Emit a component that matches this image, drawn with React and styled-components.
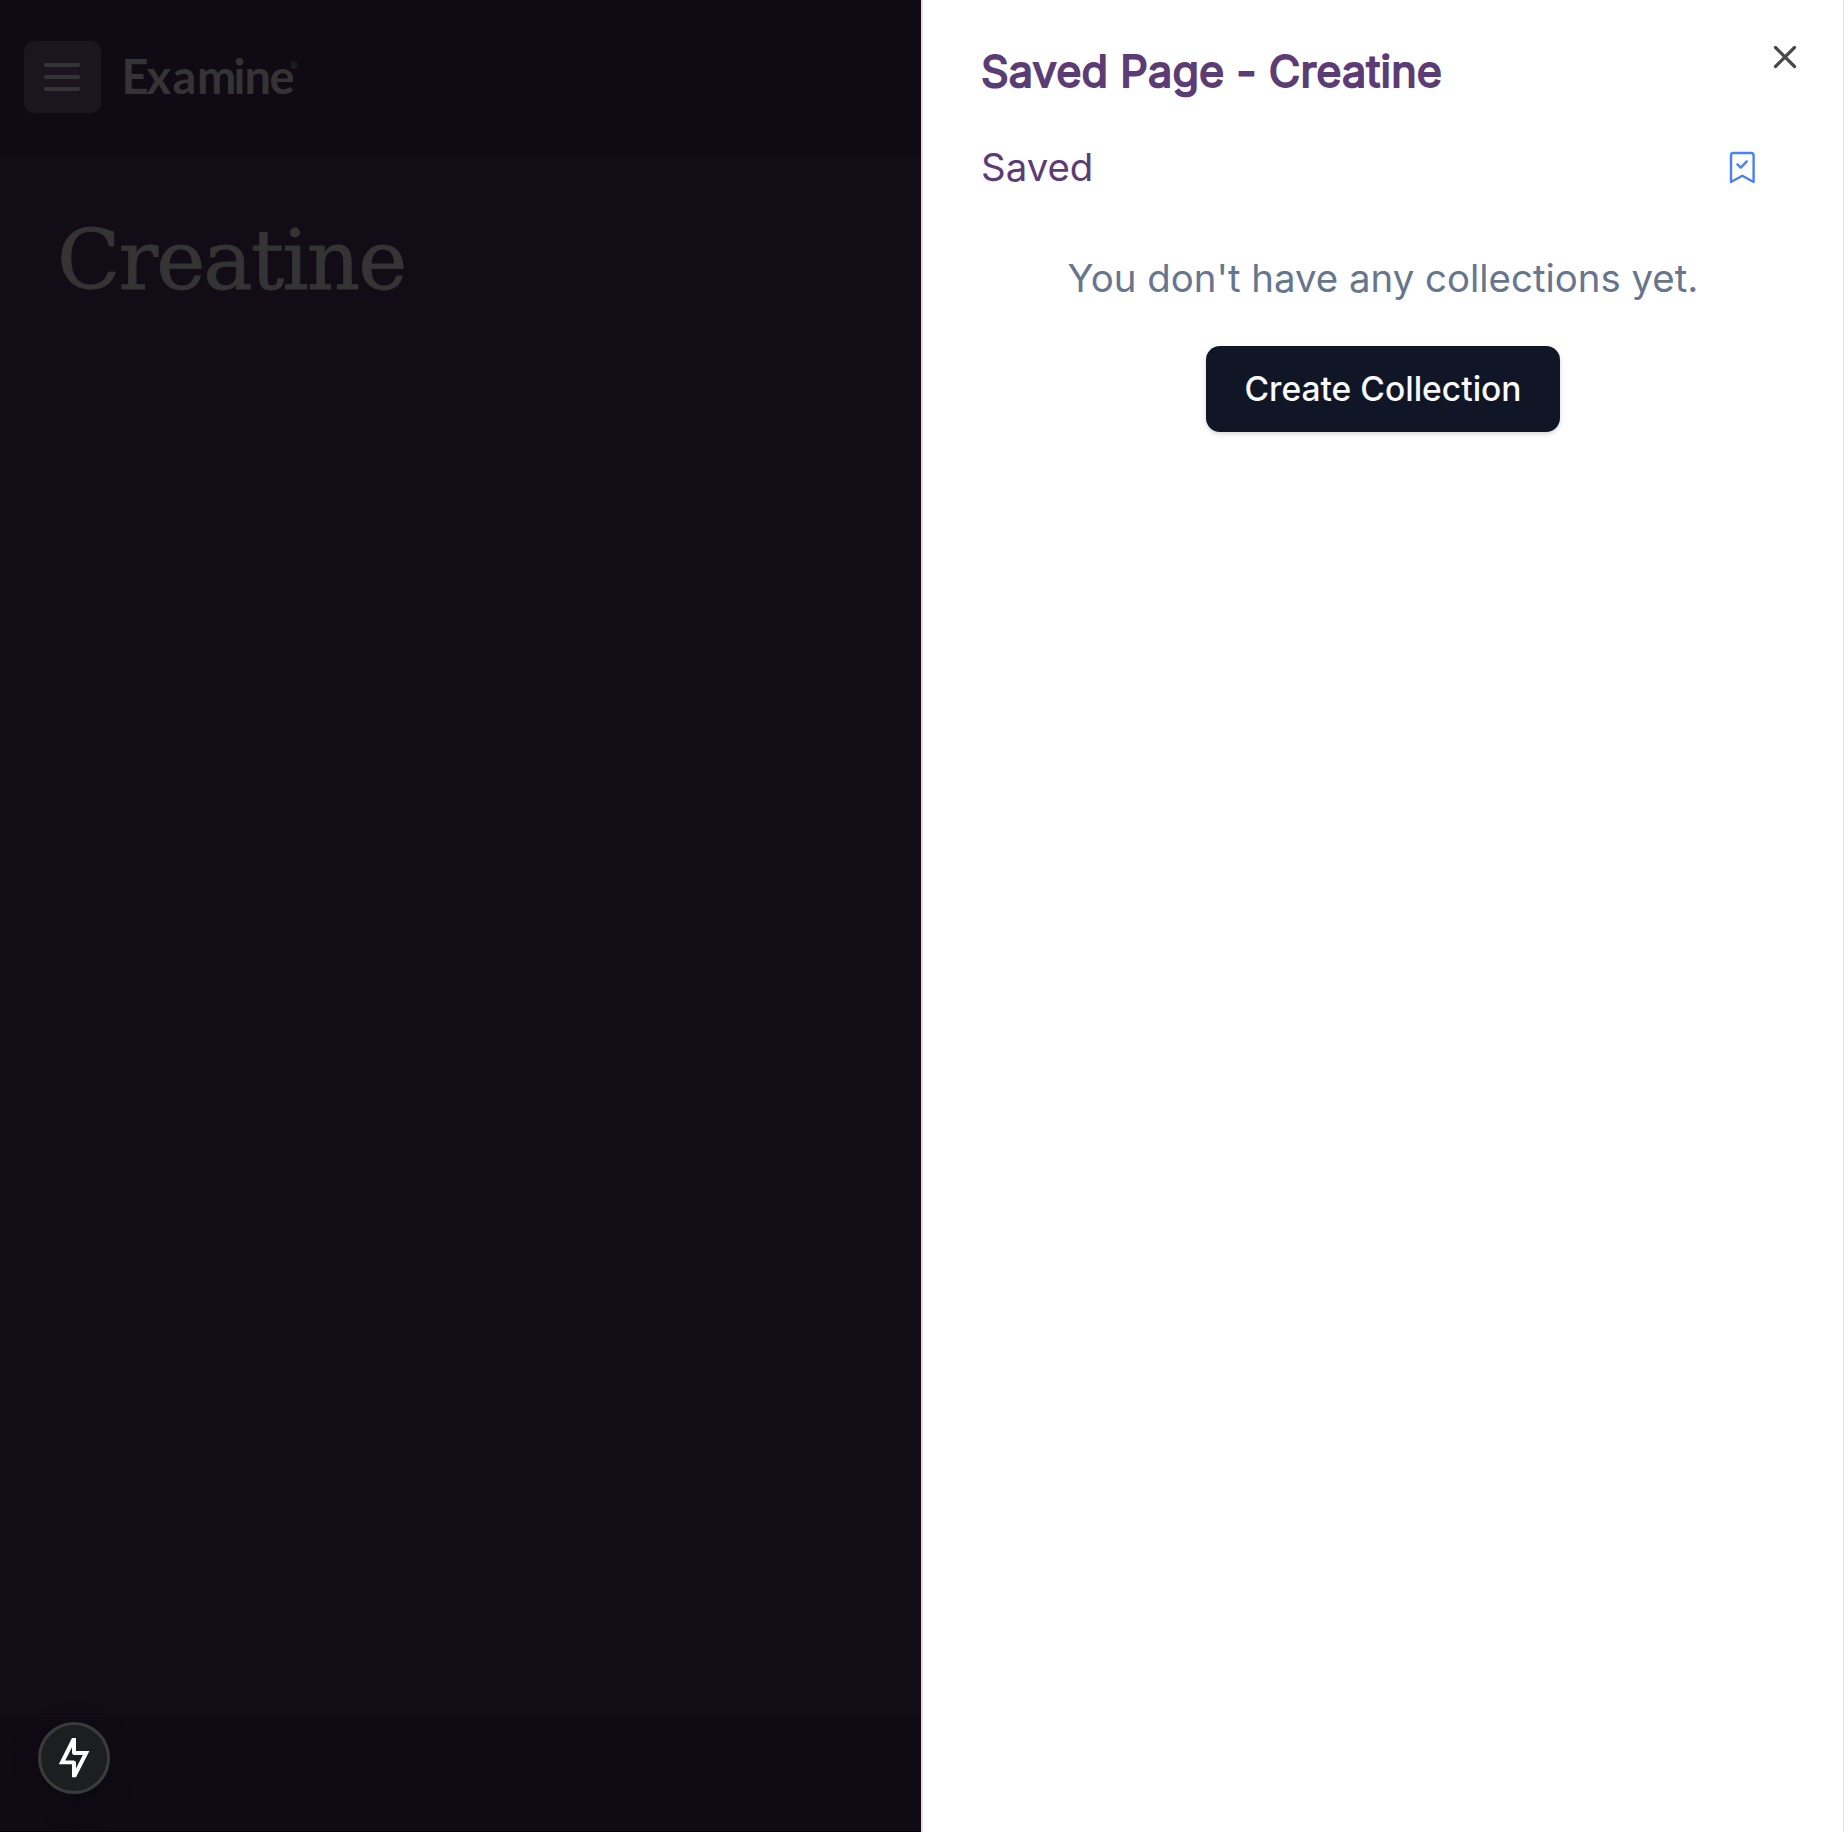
import React from 'react';
import styled, { createGlobalStyle } from 'styled-components';

const GlobalStyle = createGlobalStyle`
  *, *::before, *::after { box-sizing: border-box; }
  html, body, #root { height: 100%; }
  body {
    margin: 0;
    overflow: hidden;
    background: #120c17;
    font-family: Inter, "Liberation Sans", sans-serif;
    -webkit-font-smoothing: antialiased;
  }
`;

const Screen = styled.div`
  display: grid;
  grid-template-columns: 921px 923px;
  height: 1832px;
`;

const Page = styled.main`
  display: flex;
  flex-direction: column;
  background: #120c17;
  color: #343434;
`;

const Header = styled.header`
  display: flex;
  align-items: center;
  gap: 16px;
  height: 154px;
  padding: 0 24px;
  background: #0f0a14;
`;

const MenuButton = styled.button`
  display: flex;
  flex-direction: column;
  align-items: center;
  justify-content: center;
  gap: 8px;
  width: 77px;
  height: 72px;
  padding: 0 1px 0 0;
  border: 0;
  border-radius: 10px;
  background: #1b151f;
`;

const MenuBar = styled.span`
  width: 36px;
  height: 4px;
  border-radius: 2px;
  background: #343434;
`;

const Logo = styled.svg`
  display: block;
  width: 190px;
  height: 50px;
  overflow: visible;
  fill: #343434;
  font-family: Lato, sans-serif;
`;

const PageTitle = styled.h1`
  flex: 1;
  margin: 0;
  padding: 52px 57px 0;
  font: 400 83px/110px "DejaVu Serif", serif;
  letter-spacing: -2px;
  -webkit-text-stroke: 0.8px #343434;
`;

const Footer = styled.footer`
  display: flex;
  align-items: flex-start;
  height: 115px;
  padding: 5px 38px;
  background: #0f0a14;
  border-bottom: 1px solid #000;
`;

const DevButton = styled.button`
  display: flex;
  align-items: center;
  justify-content: center;
  width: 72px;
  height: 72px;
  padding: 0;
  border: 3px solid #3b3b3c;
  border-radius: 50%;
  background: #1d1e1f;
  box-shadow: 0 8px 32px rgba(0, 0, 0, 0.16);
`;

const Panel = styled.aside`
  position: relative;
  display: flex;
  flex-direction: column;
  padding: 44px 86px 0 58px;
  background: #fff;
  border-left: 2px solid #e2e1e8;
  border-right: 1px solid #dfdfe7;
`;

const PanelTitle = styled.h2`
  margin: 0;
  font-size: 43.2px;
  line-height: 54px;
  font-weight: 400;
  letter-spacing: 0.13px;
  -webkit-text-stroke: 1.8px #5b3c74;
  color: #5b3c74;
  white-space: nowrap;
`;

const CloseButton = styled.button`
  position: absolute;
  top: 38px;
  right: 39px;
  display: flex;
  padding: 0;
  border: 0;
  background: none;
`;

const SavedRow = styled.div`
  display: flex;
  align-items: center;
  justify-content: space-between;
  height: 58px;
  margin-top: 40px;
  font-size: 38.4px;
  color: #5b3c74;
`;

const Empty = styled.div`
  display: flex;
  flex-direction: column;
  align-items: center;
  gap: 39px;
  margin: 53px -28px 0 0;
`;

const EmptyText = styled.p`
  margin: 0;
  font-size: 38.4px;
  line-height: 58px;
  color: #67758d;
  white-space: nowrap;
`;

const CreateButton = styled.button`
  width: 354px;
  height: 86px;
  padding: 0;
  border: 0;
  border-radius: 14px;
  background: #111627;
  color: #f8fafc;
  font: 500 33.6px/48px Inter, "Liberation Sans", sans-serif;
  white-space: nowrap;
  box-shadow: 0 2px 6px rgba(0, 0, 0, 0.1), 0 2px 4px -1px rgba(0, 0, 0, 0.1);
`;

function ExamineLogo() {
  return (
    <Logo viewBox="0 0 190 50">
      <text x="4.5 29.5 55.5 80 116.5 127.5 152.5" y="42" fontSize="47" fontWeight="700">
        Examine<tspan x="173" y="16.5" fontSize="9" fontWeight="400">®</tspan>
      </text>
    </Logo>
  );
}

function BoltIcon() {
  return (
    <svg width="32" height="40" viewBox="0 0 32 40" fill="#fff">
      <path
        fillRule="evenodd"
        d="M14 0H18V13H31.4L18 39.2H14V26.2H0.8ZM14 9.2L7.2 22.4H15.2Q18 22.4 18 25.2V30.4L24.8 17H16.8Q14 17 14 14.2Z"
      />
    </svg>
  );
}

function CloseIcon() {
  return (
    <svg width="38" height="38" viewBox="0 0 38 38" fill="none" stroke="#494949" strokeWidth="3.2" strokeLinecap="round">
      <path d="M9.5 9.5L28.5 28.5M28.5 9.5L9.5 28.5" />
    </svg>
  );
}

function SavedIcon() {
  return (
    <svg width="30" height="36" viewBox="0 0 30 36" fill="none" stroke="#4a82ee" strokeWidth="2.4" strokeLinecap="round" strokeLinejoin="round">
      <path d="M4 33V6.4Q4 4 6.4 4H24.2Q26.6 4 26.6 6.4V33L15.3 26.8Z" />
      <path d="M10.4 15.4L13.8 18.6L19.8 12.4" />
    </svg>
  );
}

export default function App() {
  return (
    <>
      <GlobalStyle />
      <Screen>
        <Page>
          <Header>
            <MenuButton aria-label="Menu">
              <MenuBar />
              <MenuBar />
              <MenuBar />
            </MenuButton>
            <ExamineLogo />
          </Header>
          <PageTitle>Creatine</PageTitle>
          <Footer>
            <DevButton aria-label="Developer tools">
              <BoltIcon />
            </DevButton>
          </Footer>
        </Page>
        <Panel>
          <PanelTitle>Saved Page - Creatine</PanelTitle>
          <CloseButton aria-label="Close">
            <CloseIcon />
          </CloseButton>
          <SavedRow>
            <span>Saved</span>
            <SavedIcon />
          </SavedRow>
          <Empty>
            <EmptyText>You don't have any collections yet.</EmptyText>
            <CreateButton>Create Collection</CreateButton>
          </Empty>
        </Panel>
      </Screen>
    </>
  );
}
